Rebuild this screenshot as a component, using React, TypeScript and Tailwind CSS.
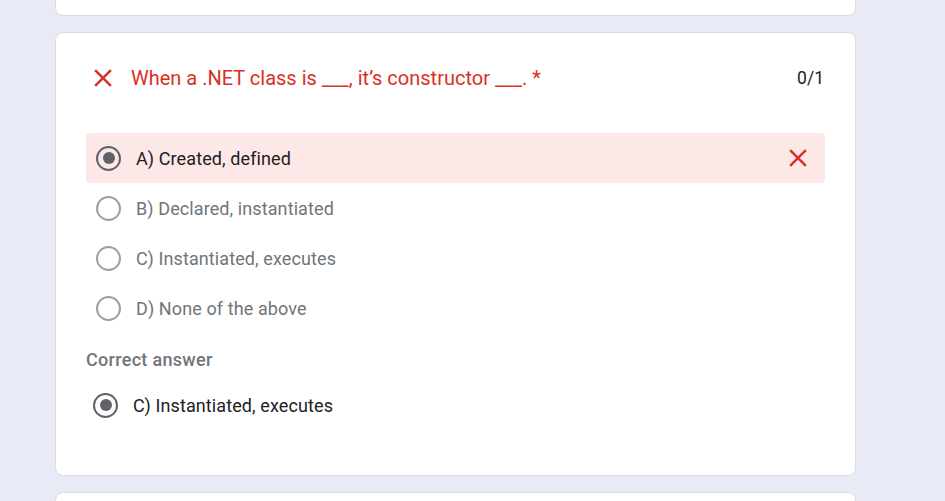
const CloseIcon = ({ className }: { className?: string }) => (
    <svg viewBox="0 0 24 24" className={className} fill="currentColor">
        <path d="M19 6.41L17.59 5 12 10.59 6.41 5 5 6.41 10.59 12 5 17.59 6.41 19 12 13.41 17.59 19 19 17.59 13.41 12z" />
    </svg>
);

const Radio = ({ checked }: { checked?: boolean }) => (
    <div
        className={`w-[25px] h-[25px] rounded-full border-[2.5px] flex items-center justify-center shrink-0 ${
            checked ? 'border-[#5f6368]' : 'border-[#9aa0a6]'
        }`}
    >
        {checked && <div className="w-[12px] h-[12px] rounded-full bg-[#5f6368]" />}
    </div>
);

const options = [
    { label: 'A) Created, defined', picked: true },
    { label: 'B) Declared, instantiated', picked: false },
    { label: 'C) Instantiated, executes', picked: false },
    { label: 'D) None of the above', picked: false },
];

const App = () => {
    return (
        <div className="min-h-screen h-[501px] overflow-hidden bg-[#e8ebf6] font-['Roboto',sans-serif]">
            <div className="ml-[55px] w-[801px] flex flex-col gap-4">
                {/* previous question, scrolled off */}
                <div className="-mt-[84px] h-[100px] bg-white border border-[#dadce0] rounded-lg" />

                {/* graded question */}
                <div className="h-[444px] bg-white border border-[#dadce0] rounded-lg px-[30px] pt-[29px]">
                    <div className="flex items-center h-[32px]">
                        <CloseIcon className="w-[30px] h-[30px] text-[#d93025] ml-[2px]" />
                        <div className="ml-[13px] text-[20px] text-[#d93025]">
                            When a .NET class is ___, it’s constructor ___. *
                        </div>
                        <div className="ml-auto mr-[1px] text-[17.5px] text-[#202124]">0/1</div>
                    </div>

                    <div className="mt-[39px] flex flex-col">
                        {options.map((o) => (
                            <div
                                key={o.label}
                                className={`h-[50px] flex items-center pl-[10px] pr-[12px] rounded ${
                                    o.picked ? 'bg-[#fce8e6]' : ''
                                }`}
                            >
                                <Radio checked={o.picked} />
                                <span
                                    className={`ml-[15px] text-[18px] tracking-[0.1px] ${
                                        o.picked ? 'text-[#202124]' : 'text-[#70757a]'
                                    }`}
                                >
                                    {o.label}
                                </span>
                                {o.picked && <CloseIcon className="ml-auto w-[30px] h-[30px] text-[#d93025]" />}
                            </div>
                        ))}
                    </div>

                    <div className="mt-[13px] text-[18px] leading-[27px] font-medium text-[#70757a] tracking-[0.3px]">
                        Correct answer
                    </div>
                    <div className="mt-[16px] h-[32px] flex items-center pl-[7px]">
                        <Radio checked />
                        <span className="ml-[15px] text-[18px] text-[#202124] tracking-[0.1px]">
                            C) Instantiated, executes
                        </span>
                    </div>
                </div>

                <div className="h-[100px] bg-white border border-[#dadce0] rounded-lg" />
            </div>
        </div>
    );
};

export default App;
